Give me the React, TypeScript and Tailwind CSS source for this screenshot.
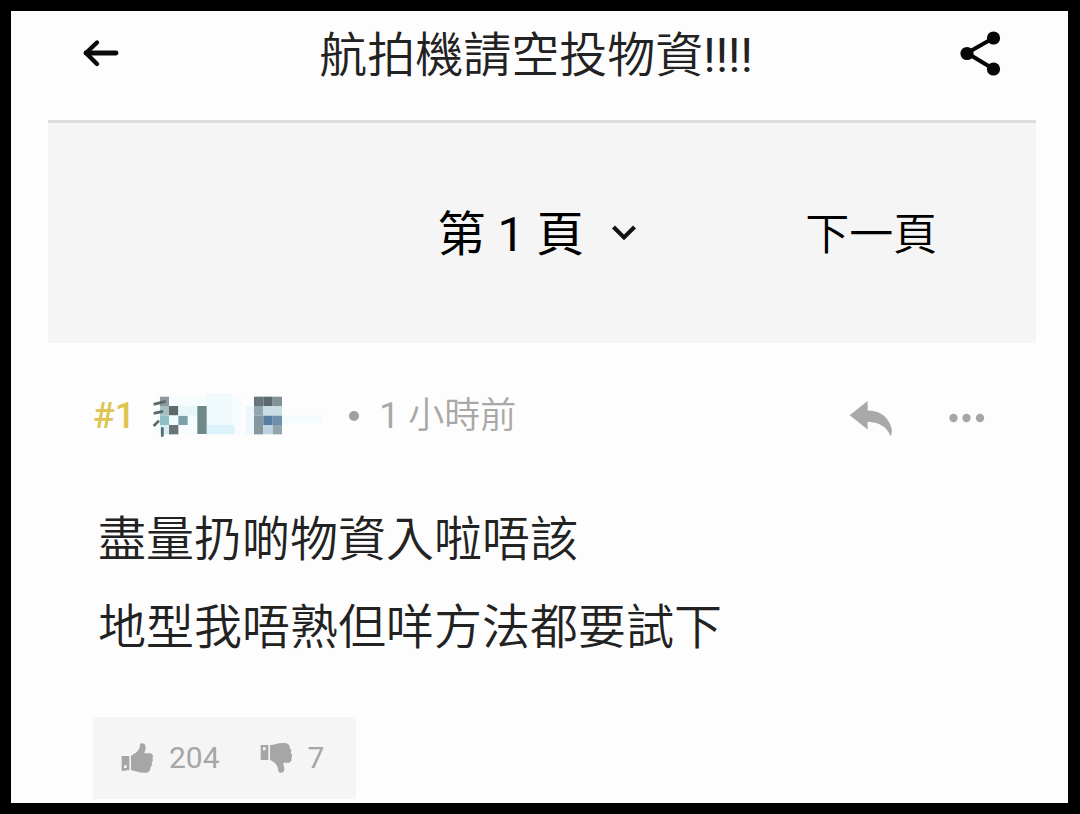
import React, { useState } from "react";

const MOSAIC: [number, number, number, number, string][] = [
  [24, 20, 250, 112, "#f6fcfd"],
  [173, 10, 77, 95, "#f0fafd"],
  [173, 105, 84, 28, "#dcf3fb"],
  [33, 20, 27, 28, "#8f989b"],
  [33, 48, 27, 29, "#a5bfc3"],
  [60, 48, 28, 28, "#5f676b"],
  [33, 77, 27, 28, "#8fbfc4"],
  [60, 77, 28, 28, "#f0fbff"],
  [88, 77, 28, 28, "#7ba0aa"],
  [33, 105, 27, 28, "#d5eef5"],
  [60, 105, 28, 28, "#6a7478"],
  [88, 48, 57, 29, "#e6f7fa"],
  [145, 48, 28, 84, "#6f8888"],
  [315, 20, 28, 28, "#66757a"],
  [343, 20, 28, 28, "#5c6a6e"],
  [371, 20, 28, 28, "#7f9297"],
  [315, 48, 28, 29, "#93a6ae"],
  [343, 48, 56, 29, "#c9dde4"],
  [315, 77, 28, 28, "#84979f"],
  [343, 77, 28, 28, "#557ca3"],
  [371, 77, 28, 28, "#6e8fae"],
  [315, 105, 28, 28, "#86999f"],
  [343, 105, 28, 28, "#bcd3e4"],
  [371, 105, 28, 28, "#93a5ac"],
  [289, 48, 26, 84, "#ecf8fc"],
  [399, 77, 120, 22, "#f4fbfd"],
];

function BackIcon() {
  return (
    <svg viewBox="0 0 48 48" className="h-12 w-12" fill="none" stroke="#0a0a0a" strokeLinecap="round" strokeLinejoin="round">
      <path d="M8 24H38" strokeWidth="4.8" />
      <path d="M19 13.5 8 24l11 11" strokeWidth="4.4" />
    </svg>
  );
}

function ShareIcon() {
  return (
    <svg viewBox="0 0 48 48" className="h-12 w-12" fill="#060606">
      <path d="M35.5 9 9 24 35.5 40" fill="none" stroke="#060606" strokeWidth="4" />
      <circle cx="35.5" cy="9" r="6.6" />
      <circle cx="9" cy="24.5" r="6.6" />
      <circle cx="35.5" cy="40" r="6.6" />
    </svg>
  );
}

function ReplyIcon() {
  return (
    <svg viewBox="0 0 130 104" className="h-9 w-11" fill="#a9a9a9">
      <path d="M2 44 55 2V30C96 29 120 54 127 88L125 104H122C113 80 92 65 55 63V86Z" />
    </svg>
  );
}

function MoreIcon() {
  return (
    <svg viewBox="0 0 36 12" className="h-3 w-9" fill="#a6a6a6">
      <circle cx="4.5" cy="6" r="4.2" />
      <circle cx="17.5" cy="6" r="4.2" />
      <circle cx="31" cy="6" r="4.2" />
    </svg>
  );
}

function ThumbUp() {
  return (
    <svg viewBox="0 0 96 96" className="h-8 w-8" fill="#a6a6a6">
      <path fillRule="evenodd" d="M2 42H25V84L2 87ZM9 70V78H17V70Z" />
      <path d="M30 41C42 36 53 27 56 16L57 7C60 1 74 2 74 15C74 22 71 29 70 34H88C95 35 98 42 94 48C97 53 95 59 92 62C94 68 92 73 88 76C89 84 84 91 77 92C60 94 45 88 30 84Z" />
    </svg>
  );
}

function ThumbDown() {
  return (
    <svg viewBox="0 0 96 96" className="h-8 w-8" fill="#a6a6a6">
      <path fillRule="evenodd" d="M2 9H25V54H2ZM9 16V25H17V16Z" />
      <path d="M30 10C44 8 55 1 76 3C85 4 90 10 89 17C94 22 95 28 92 33C97 38 97 44 94 48C97 55 93 61 86 62H70C70 70 73 75 73 82C73 94 58 96 55 87L53 76C49 65 41 58 30 54Z" />
    </svg>
  );
}

export default function App() {
  const [page, setPage] = useState("1");
  return (
    <div className="flex min-h-screen flex-col border-12 border-t-[11px] border-l-[11px] border-black bg-[#fdfdfd] pr-8 pl-[37px] font-[Roboto,'Noto_Sans_CJK_TC',sans-serif] text-[#222]">
      <header className="flex items-center justify-between border-b-[3px] border-[#dcdcdc] px-[30px] pt-[15px] pb-10">
        <button type="button" aria-label="返回">
          <BackIcon />
        </button>
        <h1 className="pt-[6px] pr-3 text-[48px] leading-[48px] font-[350] whitespace-nowrap">
          航拍機請空投物資<span className="font-normal">!!!!</span>
        </h1>
        <button type="button" aria-label="分享">
          <ShareIcon />
        </button>
      </header>

      <nav className="grid h-[220px] grid-cols-3 items-center bg-[#f5f5f5] pt-1 text-black">
        <div className="col-start-2 flex items-center justify-center pr-2.5">
          <div className="relative flex items-center">
            <select
              aria-label="頁數"
              value={page}
              onChange={(e) => setPage(e.target.value)}
              className="appearance-none bg-transparent pr-[52px] text-[48px] leading-[72px]"
            >
              <option value="1">第 1 頁</option>
              <option value="2">第 2 頁</option>
            </select>
            <svg viewBox="0 0 24 20" className="pointer-events-none absolute right-0 h-5 w-6" fill="none" stroke="#111" strokeWidth="4">
              <path d="M1.5 2 12 12.5 22.5 2" />
            </svg>
          </div>
        </div>
        <a href="#next" className="text-center text-[44px] leading-[72px] font-[350]">
          下一頁
        </a>
      </nav>

      <article className="flex flex-col items-start pt-[49px] pr-[51px] pb-1 pl-[45px]">
        <div className="flex h-12 w-full items-center text-[36px] leading-[48px] text-[#a8a8a8]">
          <span className="font-medium text-[#dfc450]">#1</span>
          <svg viewBox="0 0 540 156" className="ml-3.5 h-[52px] w-[180px]" role="img" aria-label="用戶名稱">
            {MOSAIC.map(([x, y, w, h, c], i) => (
              <rect key={i} x={x} y={y} width={w} height={h} fill={c} />
            ))}
            <path d="M14 43 50 34M14 70 42 64M14 108 30 92M40 112V140" stroke="#59666a" strokeWidth="8" fill="none" />
          </svg>
          <span className="ml-5 h-2.5 w-2.5 rounded-full bg-[#a0a0a0]" />
          <time className="ml-5">
            1 <span className="font-[350]">小時前</span>
          </time>
          <button type="button" aria-label="回覆" className="ml-auto pt-1">
            <ReplyIcon />
          </button>
          <button type="button" aria-label="更多" className="ml-14 pt-1">
            <MoreIcon />
          </button>
        </div>

        <p className="mt-14 pl-[5px] text-[48px] leading-[88px] font-[350]">
          盡量扔啲物資入啦唔該
          <br />
          地型我唔熟但咩方法都要試下
        </p>

        <div className="mt-[45px] flex h-[82px] items-center gap-10 bg-[#f5f5f6] pr-8 pl-7 text-[30px] leading-9 text-[#a6a6a6]">
          <button type="button" aria-label="讚好 204" className="flex items-center gap-4">
            <ThumbUp />
            204
          </button>
          <button type="button" aria-label="負評 7" className="flex items-center gap-4">
            <ThumbDown />7
          </button>
        </div>
      </article>
    </div>
  );
}
